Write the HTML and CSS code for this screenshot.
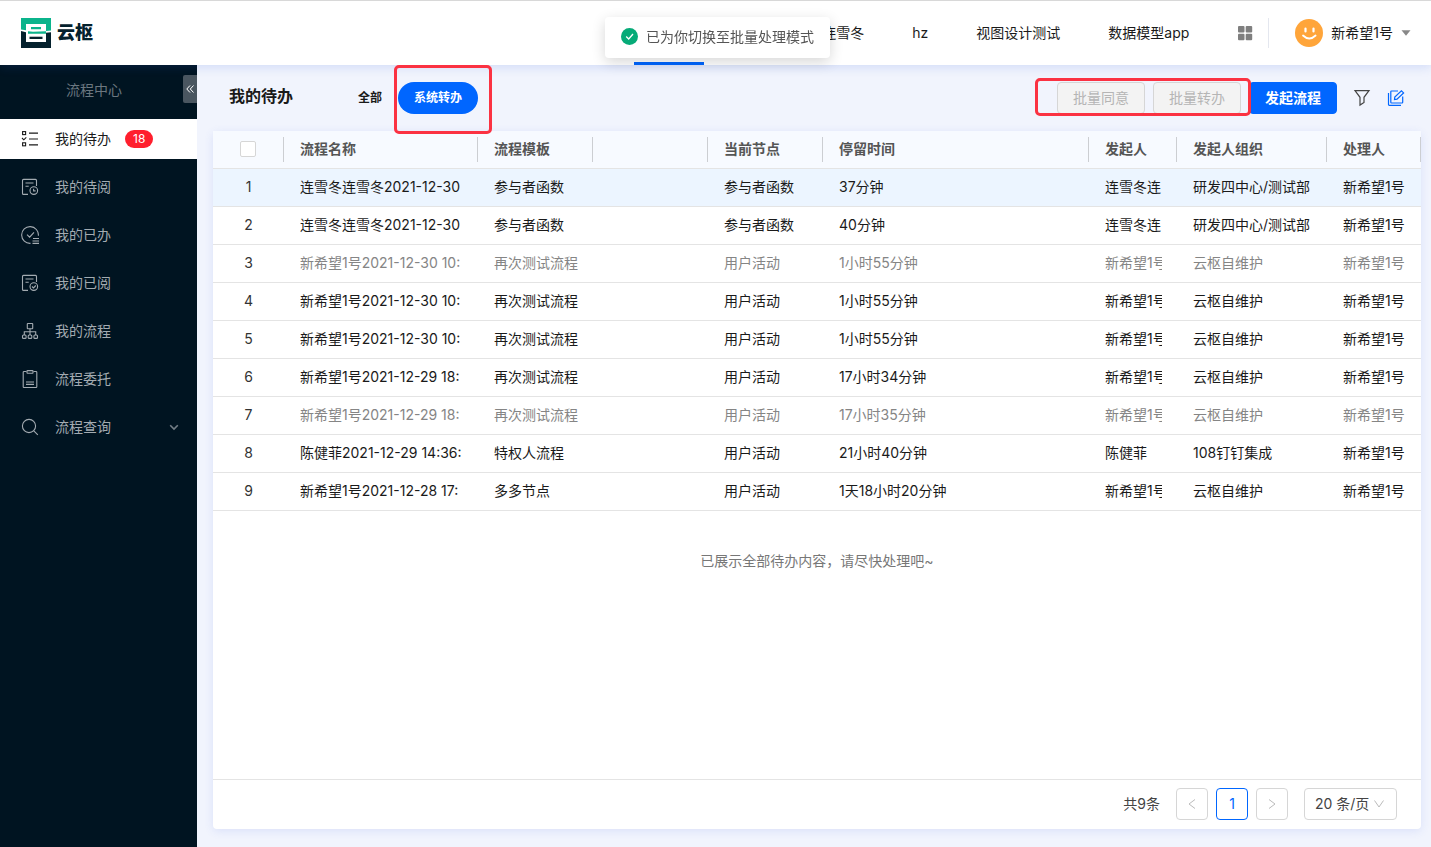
FILE: index.html
```html
<!DOCTYPE html>
<html lang="zh-CN">
<head>
    <meta charset="UTF-8">
    <meta name="viewport" content="width=device-width, initial-scale=1.0">
    <title>云枢 - 我的待办</title>
    <link rel="stylesheet" href="styles.css">
</head>
<body>
    <header class="topbar">
        <a class="logo" href="#">
            <svg width="30" height="30" viewBox="0 0 30 30">
                <path d="M0 0h30v12.500l-5 .4V6H5v6.200l-5-.8z" fill="#0bb48c"/>
                <path d="M0 13l5 1.200V24h20v-9.300l5-.5V30H0z" fill="#04212d"/>
                <path d="M10 9h10v2.300H10zM7 13.200l5 .6 13-.6v2.600H7z" fill="#0bb48c"/>
                <path d="M8.500 18.700h13V21h-13z" fill="#04212d"/>
            </svg>
            <span>云枢</span>
        </a>
        <nav class="apps">
            <a class="active" href="#" aria-label="流程中心"></a>
            <a href="#">连雪冬</a>
            <a href="#">hz</a>
            <a href="#">视图设计测试</a>
            <a href="#">数据模型app</a>
        </nav>
        <button class="grid-btn" type="button" aria-label="全部应用">
            <svg width="16" height="16" viewBox="0 0 16 16" fill="#7f7f7f">
                <rect x="1" y="1" width="6.500" height="6.500" rx="1"/>
                <rect x="8.700" y="1" width="6.500" height="6.500" rx="1"/>
                <rect x="1" y="8.700" width="6.500" height="6.500" rx="1"/>
                <rect x="8.700" y="8.700" width="6.500" height="6.500" rx="1"/>
            </svg>
        </button>
        <button class="user" type="button">
            <svg width="28" height="28" viewBox="0 0 28 28">
                <circle cx="14" cy="14" r="14" fill="#ffa53a"/>
                <path d="M10.500 9.500v3M18.500 9.500v3" stroke="#fff" stroke-width="2.200" stroke-linecap="round"/>
                <path d="M8 16.500q6.300 6 12.600 0" fill="none" stroke="#fff" stroke-width="1.800" stroke-linecap="round"/>
            </svg>
            <span>新希望1号</span>
            <svg width="10" height="6" viewBox="0 0 10 6"><path d="M.5.300h9L5 5.800z" fill="#888"/></svg>
        </button>
    </header>

    <div class="layout">
        <aside class="sidebar">
            <div class="side-head">
                <h2>流程中心</h2>
                <button class="collapse" type="button" aria-label="收起">
                    <svg width="8" height="8" viewBox="0 0 8 8"><path d="M4 .5L.8 4 4 7.500M7.500.5L4.300 4l3.200 3.500"/></svg>
                </button>
            </div>
            <nav class="menu">
                <a class="active" href="#">
                    <svg width="18" height="18" viewBox="0 0 18 18"><rect x="1.600" y="1.600" width="3" height="3"/><rect x="1.600" y="12.800" width="3" height="3"/><path d="M1 8l1.800 1.800L5.300 7.300M8 3.100h9M8 9h9M8 14.900h9"/></svg>
                    <span>我的待办</span>
                    <b class="badge">18</b>
                </a>
                <a href="#">
                    <svg width="18" height="18" viewBox="0 0 18 18"><path d="M7 16.400H2.500a1 1 0 0 1-1-1v-13a1 1 0 0 1 1-1h12a1 1 0 0 1 1 1V8M4.500 5h8M4.500 8.200h3.200"/><circle cx="12.800" cy="12.600" r="3.800"/><path d="M12.600 10.700v2.200h2"/></svg>
                    <span>我的待阅</span>
                </a>
                <a href="#">
                    <svg width="18" height="18" viewBox="0 0 18 18"><path d="M9.500 17.400A8.400 8.400 0 1 1 17.400 9.800M6 8.600l2.600 2.500L13 6.300M12 12.500h6M11.500 15h6.500M11.500 17.400h6.500"/></svg>
                    <span>我的已办</span>
                </a>
                <a href="#">
                    <svg width="18" height="18" viewBox="0 0 18 18"><path d="M7 16.400H2.500a1 1 0 0 1-1-1v-13a1 1 0 0 1 1-1h12a1 1 0 0 1 1 1V8M4.500 5h8M4.500 8.200h3.200"/><circle cx="12.800" cy="12.600" r="3.800"/><path d="M11 12.500l1.500 1.400 2.300-2.400"/></svg>
                    <span>我的已阅</span>
                </a>
                <a href="#">
                    <svg width="18" height="18" viewBox="0 0 18 18"><rect x="6.300" y="1.500" width="5.400" height="5.200" rx=".5"/><rect x="1.500" y="13" width="3.600" height="3.400" rx="1"/><rect x="7.200" y="13" width="3.600" height="3.400" rx="1"/><rect x="12.900" y="13" width="3.600" height="3.400" rx="1"/><path d="M9 6.700V13M3.300 13V9.800h11.400V13"/></svg>
                    <span>我的流程</span>
                </a>
                <a href="#">
                    <svg width="18" height="18" viewBox="0 0 18 18"><path d="M5.500 1.500H3a.8.800 0 0 0-.8.800v14.400c0 .5.300.8.800.8h12c.5 0 .8-.3.800-.8V2.300a.8.800 0 0 0-.8-.8h-2.500M5 12h8M5 14.400h8"/><rect x="6" y=".6" width="6" height="2.600" rx=".5"/></svg>
                    <span>流程委托</span>
                </a>
                <a href="#">
                    <svg width="18" height="18" viewBox="0 0 18 18"><circle cx="8" cy="8" r="6.600"/><path d="M12.800 12.800l4 4"/></svg>
                    <span>流程查询</span>
                    <svg class="arrow" width="10" height="10" viewBox="0 0 10 10"><path d="M1.200 3.200L5 7l3.800-3.800"/></svg>
                </a>
            </nav>
        </aside>

        <main class="content">
            <div class="toolbar">
                <h1>我的待办</h1>
                <button class="tab" type="button">全部</button>
                <div class="marked marked-tab">
                    <button class="tab active" type="button">系统转办</button>
                </div>
                <div class="actions">
                    <div class="marked marked-batch">
                        <button class="btn" type="button" disabled>批量同意</button>
                        <button class="btn" type="button" disabled>批量转办</button>
                    </div>
                    <button class="btn primary" type="button">发起流程</button>
                    <button class="icon-btn" type="button" aria-label="筛选">
                        <svg width="18" height="18" viewBox="0 0 18 18"><path d="M2 1.700h14l-5 6.600v5.200l-4 2.600V8.300z"/></svg>
                    </button>
                    <button class="icon-btn blue" type="button" aria-label="批量处理">
                        <svg width="18" height="18" viewBox="0 0 18 18"><path d="M11 2H4.500a.7.700 0 0 0-.7.700v10.600c0 .4.300.7.700.7H15c.4 0 .7-.3.700-.7V7.500M1.500 4v11.600c0 .5.300.8.800.8H14"/><path d="M7.500 10.500l.3-2.500 6.600-6.200 2.200 2.100-6.600 6.300z"/></svg>
                    </button>
                </div>
            </div>

            <section class="card">
                <table class="tasks">
                    <colgroup>
                        <col class="col-index"><col class="col-name"><col class="col-mid"><col class="col-mid"><col class="col-mid"><col><col class="col-user"><col class="col-org"><col class="col-handler">
                    </colgroup>
                    <thead>
                        <tr>
                            <th><label class="head"><input type="checkbox" aria-label="全选"></label></th>
                            <th><span class="head">流程名称</span></th>
                            <th><span class="head">流程模板</span></th>
                            <th><span class="head"></span></th>
                            <th><span class="head">当前节点</span></th>
                            <th><span class="head">停留时间</span></th>
                            <th><span class="head">发起人</span></th>
                            <th><span class="head">发起人组织</span></th>
                            <th><span class="head">处理人</span></th>
                        </tr>
                    </thead>
                    <tbody>
                        <tr class="hover"><td>1</td><td><div>连雪冬连雪冬2021-12-30</div></td><td>参与者函数</td><td></td><td>参与者函数</td><td>37分钟</td><td><div>连雪冬连</div></td><td>研发四中心/测试部</td><td>新希望1号</td></tr>
                        <tr><td>2</td><td><div>连雪冬连雪冬2021-12-30</div></td><td>参与者函数</td><td></td><td>参与者函数</td><td>40分钟</td><td><div>连雪冬连</div></td><td>研发四中心/测试部</td><td>新希望1号</td></tr>
                        <tr class="muted"><td>3</td><td><div>新希望1号2021-12-30 10:</div></td><td>再次测试流程</td><td></td><td>用户活动</td><td>1小时55分钟</td><td><div>新希望1号</div></td><td>云枢自维护</td><td>新希望1号</td></tr>
                        <tr><td>4</td><td><div>新希望1号2021-12-30 10:</div></td><td>再次测试流程</td><td></td><td>用户活动</td><td>1小时55分钟</td><td><div>新希望1号</div></td><td>云枢自维护</td><td>新希望1号</td></tr>
                        <tr><td>5</td><td><div>新希望1号2021-12-30 10:</div></td><td>再次测试流程</td><td></td><td>用户活动</td><td>1小时55分钟</td><td><div>新希望1号</div></td><td>云枢自维护</td><td>新希望1号</td></tr>
                        <tr><td>6</td><td><div>新希望1号2021-12-29 18:</div></td><td>再次测试流程</td><td></td><td>用户活动</td><td>17小时34分钟</td><td><div>新希望1号</div></td><td>云枢自维护</td><td>新希望1号</td></tr>
                        <tr class="muted"><td>7</td><td><div>新希望1号2021-12-29 18:</div></td><td>再次测试流程</td><td></td><td>用户活动</td><td>17小时35分钟</td><td><div>新希望1号</div></td><td>云枢自维护</td><td>新希望1号</td></tr>
                        <tr><td>8</td><td><div>陈健菲2021-12-29 14:36:</div></td><td>特权人流程</td><td></td><td>用户活动</td><td>21小时40分钟</td><td><div>陈健菲</div></td><td>108钉钉集成</td><td>新希望1号</td></tr>
                        <tr><td>9</td><td><div>新希望1号2021-12-28 17:</div></td><td>多多节点</td><td></td><td>用户活动</td><td>1天18小时20分钟</td><td><div>新希望1号</div></td><td>云枢自维护</td><td>新希望1号</td></tr>
                    </tbody>
                </table>
                <p class="end">已展示全部待办内容，请尽快处理吧~</p>
                <footer class="pager">
                    <span class="total">共9条</span>
                    <button type="button" aria-label="上一页" disabled><svg width="10" height="12" viewBox="0 0 10 12"><path d="M8 1.500L2 6l6 4.500"/></svg></button>
                    <button class="current" type="button">1</button>
                    <button type="button" aria-label="下一页" disabled><svg width="10" height="12" viewBox="0 0 10 12"><path d="M2 1.500L8 6l-6 4.500"/></svg></button>
                    <label class="size">
                        <select aria-label="每页条数"><option>20 条/页</option></select>
                        <svg width="12" height="10" viewBox="0 0 12 10"><path d="M1.500 1.500L6 8l4.500-6.500"/></svg>
                    </label>
                </footer>
            </section>
        </main>
    </div>

    <div class="toast-wrap">
        <div class="toast" role="status">
            <svg width="17" height="17" viewBox="0 0 17 17"><circle cx="8.500" cy="8.500" r="8.500" fill="#06ab78"/><path d="M5.200 8.500l2.500 2.500L12 6" fill="none" stroke="#fff" stroke-width="1.300"/></svg>
            <span>已为你切换至批量处理模式</span>
        </div>
    </div>
</body>
</html>
```
FILE: styles.css
```css
* {
    box-sizing: border-box;
}

body {
    margin: 0;
    min-height: 100vh;
    display: flex;
    flex-direction: column;
    font-family: Inter, "Noto Sans CJK SC", sans-serif;
    font-size: 14px;
    line-height: 22px;
    color: #1a1a1a;
    background: #f1f4fd;
}

a {
    color: inherit;
    text-decoration: none;
}

button,
select,
input {
    margin: 0;
    font: inherit;
    color: inherit;
}

button {
    padding: 0;
    border: none;
    background: none;
    cursor: pointer;
}

svg {
    display: block;
    flex: none;
}

/* top bar */
.topbar {
    position: relative;
    display: flex;
    align-items: center;
    height: 65px;
    padding: 0 20px;
    background: #fff;
    border-top: 1px solid #d8d8d8;
    box-shadow: 0 2px 10px rgba(40, 90, 220, 0.16);
}

.logo {
    display: flex;
    align-items: center;
    gap: 6px;
    padding-left: 1px;
    color: #04212d;
    font-size: 18px;
    font-weight: 900;
}

.apps {
    display: flex;
    align-self: stretch;
    gap: 48px;
    margin-left: auto;
}

.apps a {
    display: flex;
    align-items: center;
}

.apps .active {
    width: 70px;
    margin-right: 70px;
    border-bottom: 3px solid #0066ff;
}

.grid-btn {
    margin-left: 48px;
    padding-right: 15px;
}

.user {
    display: flex;
    align-items: center;
    gap: 8px;
    height: 30px;
    padding-left: 26px;
    border-left: 1px solid #e4e7ef;
}

/* sidebar */
.layout {
    flex: 1;
    display: flex;
}

.sidebar {
    flex: none;
    width: 197px;
    background: #001421;
    color: #a3abb1;
}

.side-head {
    display: flex;
    align-items: flex-start;
    height: 54px;
    padding-top: 10px;
}

.side-head h2 {
    flex: 1;
    margin: 0;
    padding: 4px 0 0 5px;
    font-size: 14px;
    font-weight: 400;
    text-align: center;
    color: #6b7780;
}

.collapse {
    display: flex;
    align-items: center;
    justify-content: center;
    width: 14px;
    height: 28px;
    border-radius: 2px 0 0 2px;
    background: #4a5660;
}

.collapse svg {
    fill: none;
    stroke: #fff;
}

.menu {
    display: flex;
    flex-direction: column;
    gap: 8px;
}

.menu a {
    display: flex;
    align-items: center;
    height: 40px;
    padding: 0 18px 0 21px;
}

.menu svg {
    fill: none;
    stroke: currentColor;
    stroke-width: 1.1;
}

.menu span {
    margin-left: 16px;
}

.menu .active {
    background: #fff;
    color: #1a1a1a;
}

.menu .arrow {
    margin-left: auto;
    stroke-width: 1.6;
    opacity: 0.7;
}

.badge {
    height: 18px;
    margin-left: 14px;
    padding: 0 8px;
    border-radius: 9px;
    background: #ff1f2d;
    color: #fff;
    font-size: 12px;
    font-weight: 400;
    line-height: 18px;
}

/* toolbar */
.content {
    flex: 1;
    min-width: 0;
    display: flex;
    flex-direction: column;
    padding: 0 10px 18px 16px;
}

.toolbar {
    display: flex;
    align-items: center;
    height: 66px;
    padding: 0 16px;
}

.toolbar h1 {
    margin: 0 49px 0 0;
    padding-bottom: 4px;
    font-size: 16px;
    font-weight: 600;
}

.tab {
    height: 32px;
    padding: 0 16px;
    border-radius: 16px;
    font-size: 12px;
    font-weight: 600;
}

.tab.active {
    background: #0066ff;
    color: #fff;
}

/* red frames drawn round the highlighted controls */
.marked {
    position: relative;
    display: flex;
    gap: 8px;
}

.marked::after {
    content: "";
    position: absolute;
    z-index: 1;
    border: 3px solid #fb3242;
    border-radius: 5px;
    pointer-events: none;
}

.marked-tab::after {
    inset: -17px -14px -20px -4px;
}

.marked-batch::after {
    inset: -4px -10px -2px -22px;
}

.actions {
    display: flex;
    align-items: center;
    gap: 8px;
    margin-left: auto;
}

.btn {
    width: 88px;
    height: 32px;
    border: 1px solid #d6d6d6;
    border-radius: 4px;
}

.btn:disabled {
    background: #f3f3f3;
    color: #b5b5b5;
    cursor: not-allowed;
}

.btn.primary {
    border-color: #0066ff;
    background: #0066ff;
    color: #fff;
    font-weight: 600;
}

.icon-btn {
    padding: 0 8px;
}

.icon-btn svg {
    fill: none;
    stroke: #444;
    stroke-width: 1.2;
}

.icon-btn.blue {
    padding: 0;
}

.icon-btn.blue svg {
    stroke: #0066ff;
}

/* task table */
.card {
    flex: 1;
    display: flex;
    flex-direction: column;
    background: #fff;
    border-radius: 4px;
    box-shadow: 0 2px 10px rgba(60, 90, 220, 0.12);
}

.tasks {
    width: 100%;
    table-layout: fixed;
    border-collapse: separate;
    border-spacing: 0;
}

.col-index {
    width: 71px;
}

.col-name {
    width: 194px;
}

.col-mid {
    width: 115px;
}

.col-user {
    width: 88px;
}

.col-org {
    width: 150px;
}

.col-handler {
    width: 94px;
}

.tasks th,
.tasks td {
    height: 38px;
    padding: 0 0 2px 16px;
    border-bottom: 1px solid #e4e4e4;
    text-align: left;
    white-space: nowrap;
}

.tasks th {
    padding-bottom: 1px;
    background: #f7faff;
    color: #555;
    font-weight: 600;
}

.tasks th:first-child,
.tasks td:first-child {
    padding-left: 0;
    text-align: center;
}

.head {
    display: flex;
    align-items: center;
    height: 25px;
    border-right: 1px solid #ccced2;
}

label.head {
    justify-content: center;
}

.head input {
    appearance: none;
    width: 16px;
    height: 16px;
    border: 1px solid #d6d6d6;
    border-radius: 2px;
    background: #fff;
}

.tasks td div {
    margin-right: 15px;
    overflow: hidden;
}

.hover td {
    background: #ecf5ff;
}

.muted td {
    color: #858585;
}

.tasks td:first-child {
    color: #333;
}

.end {
    margin: 39px 0;
    text-align: center;
    color: #777;
}

/* pagination */
.pager {
    display: flex;
    align-items: center;
    justify-content: flex-end;
    gap: 8px;
    height: 50px;
    margin-top: auto;
    padding: 0 24px 2px;
    border-top: 1px solid #e4e4e4;
    color: #444;
}

.total {
    margin-right: 8px;
}

.pager button {
    display: flex;
    align-items: center;
    justify-content: center;
    width: 32px;
    height: 32px;
    border: 1px solid #d6d6d6;
    border-radius: 4px;
}

.pager .current {
    border-color: #0066ff;
    color: #0066ff;
}

.pager svg {
    fill: none;
    stroke: #bbb;
}

.size {
    display: grid;
    align-items: center;
    margin-left: 8px;
}

.size select,
.size svg {
    grid-area: 1 / 1;
}

.size select {
    appearance: none;
    width: 93px;
    height: 32px;
    padding: 0 10px;
    border: 1px solid #d6d6d6;
    border-radius: 4px;
    background: #fff;
}

.size svg {
    justify-self: end;
    margin-right: 12px;
    pointer-events: none;
}

/* message */
.toast-wrap {
    position: fixed;
    z-index: 10;
    top: 17px;
    left: 4px;
    right: 0;
    display: flex;
    justify-content: center;
    pointer-events: none;
}

.toast {
    display: flex;
    align-items: center;
    gap: 8px;
    padding: 9px 16px 11px;
    border-radius: 4px;
    background: #fff;
    color: #555;
    line-height: 21px;
    box-shadow: 0 4px 14px rgba(0, 0, 0, 0.16);
}
```
